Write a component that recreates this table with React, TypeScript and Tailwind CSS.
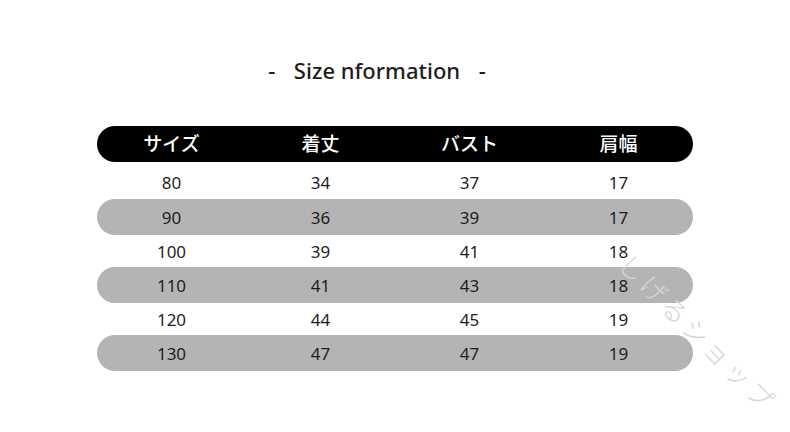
const rows = [
  ['80', '34', '37', '17'],
  ['90', '36', '39', '17'],
  ['100', '39', '41', '18'],
  ['110', '41', '43', '18'],
  ['120', '44', '45', '19'],
  ['130', '47', '47', '19'],
];

const headers = ['サイズ', '着丈', 'バスト', '肩幅'];

export default function App() {
  return (
    <div className="relative w-[790px] h-[432px] bg-white overflow-hidden font-['Noto_Sans','Noto_Sans_CJK_JP',sans-serif] text-[#1e1e1e]">
      <div className="pt-[54px] flex justify-center items-center gap-[12px] pr-[36px] text-[22px] font-medium leading-[32px]">
        <span className="w-[10px] text-center">-</span>
        <span className="px-[5px]">Size nformation</span>
        <span className="w-[10px] text-center">-</span>
      </div>

      <div className="mt-[40px] mx-[97px] w-[596px]">
        <div className="h-9 rounded-full bg-black text-white grid grid-cols-4 items-center text-[19px] font-medium">
          {headers.map((h) => (
            <div key={h} className="text-center">{h}</div>
          ))}
        </div>
        {rows.map((r, i) => {
          const gray = i % 2 === 1;
          const h = gray ? 'h-9 pt-[2px]' : i === 0 ? 'h-[37px] pt-[5px]' : 'h-8 pt-[2px]';
          return (
            <div
              key={i}
              className={`${h} grid grid-cols-4 items-center text-[17px] ${gray ? 'bg-[#b4b4b4] rounded-full' : ''}`}
            >
              {r.map((c, j) => (
                <div key={j} className="text-center">{c}</div>
              ))}
            </div>
          );
        })}
      </div>

      <div className="absolute left-[590px] top-[320px] w-[215px] text-center rotate-[45deg] text-[26px] font-light tracking-[4px] text-[#d6d6d6] leading-none">
        しげるショップ
      </div>
    </div>
  );
}
